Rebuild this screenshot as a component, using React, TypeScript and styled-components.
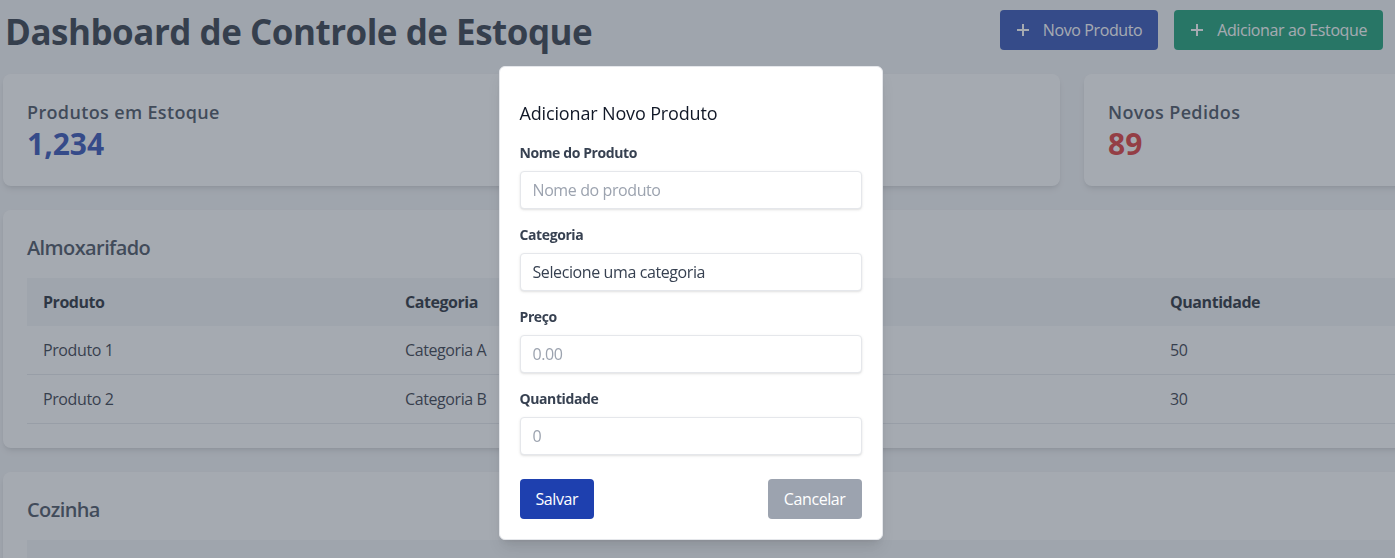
import React from 'react';
import styled, { createGlobalStyle } from 'styled-components';

const FONT = `"Open Sans", "Noto Sans", sans-serif`;

const GlobalStyle = createGlobalStyle`
  *, *::before, *::after { box-sizing: border-box; }
  html, body {
    margin: 0;
    background: #f3f4f6;
    overflow: hidden;
    font-family: ${FONT};
  }
`;

const Page = styled.div`
  width: 1620px;
  padding: 10px 0 0 3px;
`;

const Header = styled.header`
  width: 1380px;
  height: 40px;
  display: flex;
  align-items: center;
  justify-content: space-between;
  margin-bottom: 24px;
`;

const Title = styled.h1`
  margin: 3px 0 0;
  font-size: 35px;
  line-height: 40px;
  font-weight: 700;
  letter-spacing: -0.5px;
  color: #1f2937;
  padding-left: 2px;
`;

const Actions = styled.div`
  display: flex;
  gap: 16px;
`;

const ActionButton = styled.button<{ $variant: 'blue' | 'green' }>`
  display: flex;
  align-items: center;
  height: 40px;
  padding: 0 16px;
  border: 0;
  border-radius: 4px;
  color: #fff;
  font-family: ${FONT};
  font-size: 16px;
  letter-spacing: -0.4px;
  background: ${(p) => (p.$variant === 'blue' ? '#1e40af' : '#059669')};
  svg { margin-right: 13px; }
`;

const StatsGrid = styled.div`
  display: grid;
  grid-template-columns: repeat(3, 516.5px);
  gap: 24px;
  margin-bottom: 24px;
`;

const Card = styled.div`
  background: #fff;
  border-radius: 8px;
  box-shadow: 0 4px 6px -1px rgba(0, 0, 0, 0.1), 0 2px 4px -2px rgba(0, 0, 0, 0.1);
  padding: 24px;
`;

const StatLabel = styled.div`
  font-size: 18px;
  line-height: 28px;
  font-weight: 600;
  letter-spacing: 0.35px;
  color: #374151;
`;

const StatValue = styled.div<{ $color: string }>`
  font-size: 30px;
  line-height: 36px;
  font-weight: 700;
  color: ${(p) => p.$color};
`;

const Section = styled(Card)`
  width: 1597.5px;
  margin-bottom: 24px;
`;

const SectionTitle = styled.h2`
  margin: 0 0 16px;
  font-size: 20px;
  line-height: 28px;
  font-weight: 600;
  letter-spacing: -0.6px;
  color: #374151;
`;

const Table = styled.table`
  width: 100%;
  border-collapse: collapse;
  table-layout: fixed;
`;

const Th = styled.th`
  text-align: left;
  padding: 12px 16px;
  background: #f3f4f6;
  font-size: 16px;
  line-height: 24px;
  font-weight: 700;
  letter-spacing: -0.45px;
  color: #111827;
`;

const Td = styled.td`
  padding: 12px 16px;
  font-size: 16px;
  line-height: 24px;
  letter-spacing: -0.4px;
  color: #1f2937;
  border-bottom: 1px solid #e5e7eb;
`;

const Overlay = styled.div`
  position: fixed;
  inset: 0;
  background: rgba(75, 85, 99, 0.5);
  display: flex;
  justify-content: center;
  align-items: flex-start;
  padding: 66px 14px 0 0;
`;

const Modal = styled.div`
  width: 384px;
  padding: 20px;
  background: #fff;
  border: 1px solid #e5e7eb;
  border-radius: 6px;
  box-shadow: 0 10px 15px -3px rgba(0, 0, 0, 0.1), 0 4px 6px -4px rgba(0, 0, 0, 0.1);
`;

const ModalBody = styled.div`
  margin-top: 14px;
`;

const ModalTitle = styled.h3`
  margin: 0 0 18px;
  font-size: 18px;
  line-height: 24px;
  font-weight: 500;
  letter-spacing: -0.15px;
  color: #111827;
`;

const Field = styled.div<{ $last?: boolean }>`
  margin-bottom: ${(p) => (p.$last ? '24px' : '16px')};
`;

const Label = styled.label`
  display: block;
  margin-bottom: 8px;
  font-size: 14px;
  line-height: 20px;
  font-weight: 700;
  letter-spacing: -0.4px;
  color: #374151;
`;

const inputStyles = `
  display: block;
  width: 100%;
  height: 38px;
  padding: 8px 12px;
  border: 1px solid #e5e7eb;
  border-radius: 4px;
  box-shadow: 0 1px 3px 0 rgba(0, 0, 0, 0.1), 0 1px 2px -1px rgba(0, 0, 0, 0.1);
  font-family: ${FONT};
  font-size: 16px;
  line-height: 20px;
  letter-spacing: -0.4px;
  color: #374151;
  background: #fff;
  appearance: none;
  outline: none;
`;

const Input = styled.input`
  ${inputStyles}
  &::placeholder { color: #9ca3af; }
`;

const Select = styled.select`
  ${inputStyles}
`;

const ModalActions = styled.div`
  display: flex;
  justify-content: space-between;
`;

const ModalButton = styled.button<{ $variant: 'primary' | 'muted' }>`
  height: 40px;
  padding: 0 16px;
  border: 0;
  border-radius: 4px;
  font-family: ${FONT};
  font-size: 16px;
  letter-spacing: -0.4px;
  color: #fff;
  background: ${(p) => (p.$variant === 'primary' ? '#1e40af' : '#9ca3af')};
`;

const PlusIcon = () => (
  <svg width="14" height="14" viewBox="0 0 14 14" aria-hidden="true">
    <path d="M7 1v12M1 7h12" stroke="currentColor" strokeWidth="2" />
  </svg>
);

const sections = [
  {
    name: 'Almoxarifado',
    rows: [
      ['Produto 1', 'Categoria A', 'R$ 10,00', '50'],
      ['Produto 2', 'Categoria B', 'R$ 20,00', '30'],
    ],
  },
  {
    name: 'Cozinha',
    rows: [['Produto 3', 'Categoria C', 'R$ 15,00', '20']],
  },
];

export default function App() {
  return (
    <>
      <GlobalStyle />
      <Page>
        <Header>
          <Title>Dashboard de Controle de Estoque</Title>
          <Actions>
            <ActionButton $variant="blue"><PlusIcon />Novo Produto</ActionButton>
            <ActionButton $variant="green"><PlusIcon />Adicionar ao Estoque</ActionButton>
          </Actions>
        </Header>
        <StatsGrid>
          <Card>
            <StatLabel>Produtos em Estoque</StatLabel>
            <StatValue $color="#1e40af">1,234</StatValue>
          </Card>
          <Card>
            <StatLabel>Produtos Baixo Estoque</StatLabel>
            <StatValue $color="#d97706">23</StatValue>
          </Card>
          <Card>
            <StatLabel>Novos Pedidos</StatLabel>
            <StatValue $color="#dc2626">89</StatValue>
          </Card>
        </StatsGrid>
        {sections.map((s) => (
          <Section key={s.name}>
            <SectionTitle>{s.name}</SectionTitle>
            <Table>
              <colgroup>
                <col style={{ width: 362 }} />
                <col style={{ width: 382 }} />
                <col style={{ width: 383 }} />
                <col />
              </colgroup>
              <thead>
                <tr>
                  <Th>Produto</Th>
                  <Th>Categoria</Th>
                  <Th>Preço</Th>
                  <Th>Quantidade</Th>
                </tr>
              </thead>
              <tbody>
                {s.rows.map((r) => (
                  <tr key={r[0]}>
                    {r.map((c, i) => <Td key={i}>{c}</Td>)}
                  </tr>
                ))}
              </tbody>
            </Table>
          </Section>
        ))}
      </Page>
      <Overlay>
        <Modal>
          <ModalBody>
            <ModalTitle>Adicionar Novo Produto</ModalTitle>
            <form onSubmit={(e) => e.preventDefault()}>
              <Field>
                <Label htmlFor="nome">Nome do Produto</Label>
                <Input id="nome" type="text" placeholder="Nome do produto" />
              </Field>
              <Field>
                <Label htmlFor="categoria">Categoria</Label>
                <Select id="categoria" defaultValue="">
                  <option value="">Selecione uma categoria</option>
                  <option value="a">Categoria A</option>
                  <option value="b">Categoria B</option>
                </Select>
              </Field>
              <Field>
                <Label htmlFor="preco">Preço</Label>
                <Input id="preco" type="number" placeholder="0.00" />
              </Field>
              <Field $last>
                <Label htmlFor="qtd">Quantidade</Label>
                <Input id="qtd" type="number" placeholder="0" />
              </Field>
              <ModalActions>
                <ModalButton type="submit" $variant="primary">Salvar</ModalButton>
                <ModalButton type="button" $variant="muted">Cancelar</ModalButton>
              </ModalActions>
            </form>
          </ModalBody>
        </Modal>
      </Overlay>
    </>
  );
}
